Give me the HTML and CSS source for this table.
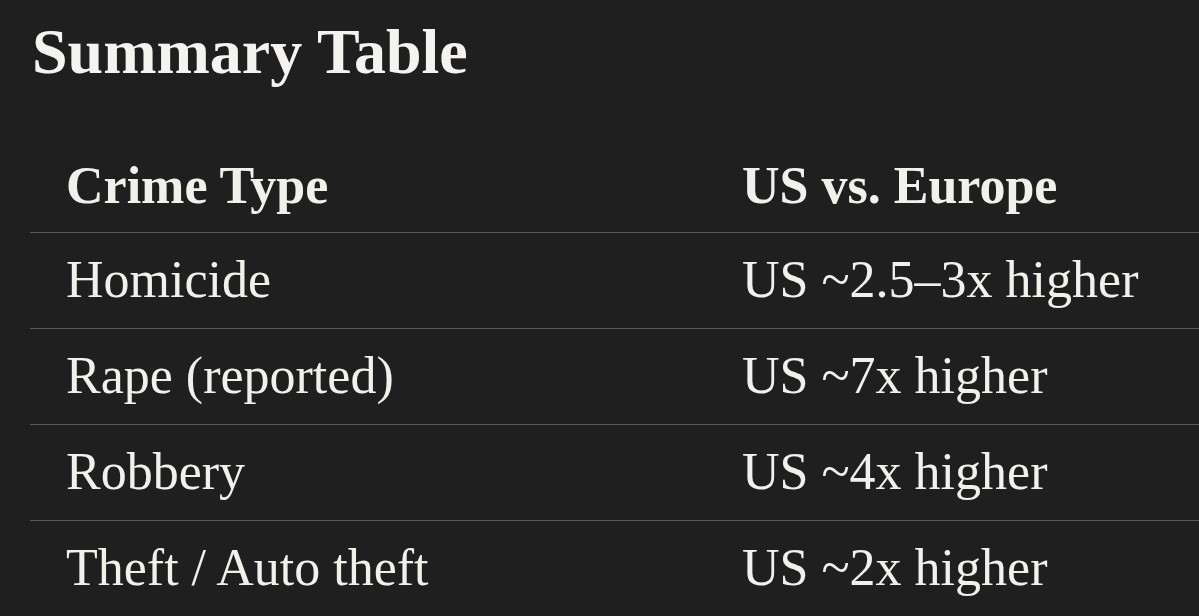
FILE: index.html
```html
<!DOCTYPE html>
<html lang="en">
<head>
<meta charset="utf-8">
<title>Summary Table</title>
<link rel="stylesheet" href="styles.css">
</head>
<body>
<main class="page">
  <h2 class="title">Summary Table</h2>
  <table class="summary">
    <thead>
      <tr><th class="col-type">Crime Type</th><th>US vs. Europe</th></tr>
    </thead>
    <tbody>
      <tr><td>Homicide</td><td>US ~2.5–3x higher</td></tr>
      <tr><td>Rape (reported)</td><td>US ~7x higher</td></tr>
      <tr><td>Robbery</td><td>US ~4x higher</td></tr>
      <tr><td>Theft / Auto theft</td><td>US ~2x higher</td></tr>
    </tbody>
  </table>
</main>
</body>
</html>
```

FILE: styles.css
```css
html, body {
  margin: 0;
  padding: 0;
  background: #1f1f1f;
  overflow: hidden;
}

.page {
  padding: 14px 0 0 30px;
  font-family: "Liberation Serif", "Times New Roman", serif;
  color: #f1f0eb;
}

.title {
  margin: 0 0 0 2px;
  font-size: 64px;
  line-height: 76px;
  font-weight: 700;
  color: #f4f3ef;
}

.summary {
  margin-top: 50px;
  width: calc(100vw - 30px);
  border-collapse: collapse;
  table-layout: fixed;
}

.summary th,
.summary td {
  text-align: left;
  vertical-align: middle;
  padding: 0 0 0 36px;
  font-size: 52px;
  line-height: 1.2;
  border-bottom: 1px solid #5a5a5a;
  white-space: nowrap;
}

.summary th {
  height: 92px;
  font-weight: 700;
}

.summary td {
  height: 95px;
  font-weight: 400;
}

.summary .col-type {
  width: 640px;
}
```
